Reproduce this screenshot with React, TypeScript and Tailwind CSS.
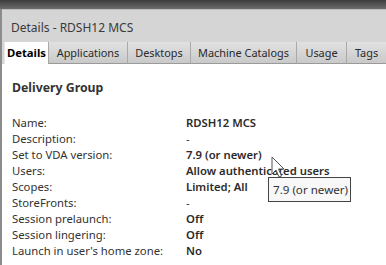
import React from "react";

const rows: [string, string, boolean][] = [
  ["Name:", "RDSH12 MCS", true],
  ["Description:", "-", false],
  ["Set to VDA version:", "7.9 (or newer)", true],
  ["Users:", "Allow authenticated users", true],
  ["Scopes:", "Limited; All", true],
  ["StoreFronts:", "-", false],
  ["Session prelaunch:", "Off", true],
  ["Session lingering:", "Off", true],
  ["Launch in user's home zone:", "No", true],
];

const tabs: [string, string][] = [
  ["Applications", "w-[79px]"],
  ["Desktops", "w-[63px]"],
  ["Machine Catalogs", "w-[106px]"],
  ["Usage", "w-[50px]"],
  ["Tags", "w-[40px]"],
];

export default function App() {
  return (
    <div
      className="relative w-[386px] h-[265px] overflow-hidden bg-[#d5d5d5] text-[#333]"
      style={{ fontFamily: '"Noto Sans", "Open Sans", sans-serif' }}
    >
      <div className="h-[9px] bg-gradient-to-b from-[#3d3d3d] to-[#6d6d6d]" />
      <div className="border-l-[2px] border-[#8c8c8c] h-[256px] flex flex-col">
        <div className="h-[33px] pl-[9px] pt-[9px] text-[12px] text-[#3a3a3a] leading-[18px] border-t border-[#bdbdbd]">
          Details - RDSH12 MCS
        </div>
        <div className="flex h-[22px] pl-[2px] shrink-0">
          <div className="w-[52px] text-center bg-white text-[11.3px] font-bold text-black leading-[22px] h-[23px] border-l border-[#e8e8e8]">
            Details
          </div>
          {tabs.map(([t, w]) => (
            <div
              key={t}
              className={`${w} shrink-0 text-center text-[10.9px] leading-[21px] text-[#2a2a2a] bg-gradient-to-b from-[#e2e2e2] to-[#c9c9c9] border-l border-[#a9a9a9] border-b border-b-[#9a9a9a] whitespace-nowrap`}
            >
              {t}
            </div>
          ))}
        </div>
        <div className="flex-1 bg-white pl-[10px]">
          <div className="pt-[15px] text-[12.3px] font-bold text-[#333] leading-[18px]">Delivery Group</div>
          <div className="mt-[18px] flex flex-col">
            {rows.map(([l, v, b]) => (
              <div key={l} className="flex h-[16px] text-[11.3px] leading-[16px]">
                <div className="w-[174px] text-[#333]">{l}</div>
                <div className={b ? "font-semibold text-[#2b2b2b]" : "text-[#333]"}>{v}</div>
              </div>
            ))}
          </div>
        </div>
      </div>
      <div className="absolute left-[268px] top-[177px] w-[83px] h-[25px] bg-[#f8f8f8] border border-[#444] text-[11.6px] text-[#333] leading-[23px] pl-[4px] whitespace-nowrap">
        7.9 (or newer)
      </div>
      <svg className="absolute left-[271px] top-[156px]" width="16" height="24" viewBox="0 0 16 24">
        <path d="M1 1 L1 18 L5 14 L8 21 L10.5 20 L7.5 13 L13 13 Z" fill="#fff" stroke="#555" strokeWidth="1" strokeLinejoin="round" />
      </svg>
    </div>
  );
}
